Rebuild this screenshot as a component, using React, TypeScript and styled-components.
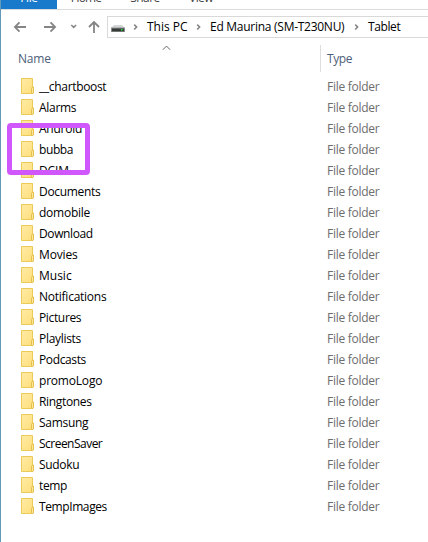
import React from "react";
import styled, { createGlobalStyle } from "styled-components";

const GlobalStyle = createGlobalStyle`
  * { box-sizing: border-box; }
  body { margin: 0; background: #fff; overflow: hidden; }
`;

const Window = styled.div`
  position: relative;
  display: flex;
  flex-direction: column;
  width: 428px;
  height: 542px;
  overflow: hidden;
  background: #fff;
  border-left: 1px solid #639ab8;
  font: 12px/21px "Open Sans", "Noto Sans", sans-serif;
  color: #000;
`;

const Text = styled.span<{ $track?: number }>`
  white-space: pre;
  letter-spacing: ${(p) => p.$track ?? 0}px;
`;

const TabBar = styled.div`
  display: flex;
  flex: none;
  height: 10px;
  overflow: hidden;
  border-bottom: 1px solid #dadbdc;
`;

const Tab = styled.div<{ $width: number; $active?: boolean }>`
  flex: none;
  width: ${(p) => p.$width}px;
  height: 9px;
  display: flex;
  align-items: flex-end;
  justify-content: center;
  line-height: 22px;
  color: ${(p) => (p.$active ? "#fff" : "#444")};
  background: ${(p) => (p.$active ? "#1979ca" : "transparent")};

  span { margin-bottom: 0; }
`;

const NavBar = styled.div`
  display: flex;
  flex: none;
  height: 28px;
  padding-top: 6px;
`;

const NavButtons = styled.div`
  flex: none;
  width: 106px;
  height: 22px;
  svg { display: block; }
`;

const AddressBar = styled.div`
  display: flex;
  align-items: center;
  flex: 1;
  height: 22px;
  border: 1px solid #d9d9d9;
  border-right: 0;
  padding-left: 3px;
  line-height: 20px;
`;

const Crumb = styled(Text)<{ $width: number }>`
  flex: none;
  width: ${(p) => p.$width}px;
`;

const Separator = styled.svg<{ $gap: number }>`
  flex: none;
  margin-right: ${(p) => p.$gap}px;
`;

const HeaderRow = styled.div`
  display: grid;
  grid-template-columns: 319px 1fr;
  flex: none;
  height: 38px;
  padding: 7px 0 6px;
  color: #4c607a;
`;

const HeaderCell = styled.div`
  position: relative;
  padding-left: 17px;
  line-height: 27px;
  & + & { padding-left: 6px; border-left: 1px solid #dedede; }
`;

const SortMark = styled.svg`
  position: absolute;
  left: 161px;
  top: 0;
`;

const FileList = styled.div`
  display: flex;
  flex-direction: column;
`;

const Row = styled.div`
  display: grid;
  grid-template-columns: 18px 288px 1fr;
  align-items: start;
  height: 21px;
  padding-left: 20px;
  line-height: 22px;
  svg { margin-top: 2px; }
`;

const Kind = styled(Text)`
  color: #6d6d6d;
`;

const Highlight = styled.div`
  position: absolute;
  left: 6px;
  top: 123px;
  width: 83px;
  height: 52px;
  border: 5px solid #d057fb;
  border-radius: 4px;
`;

const FolderIcon = () => (
  <svg width="13" height="16" viewBox="0 0 13 16">
    <defs>
      <linearGradient id="folder" x1="0" y1="0" x2="1" y2="1">
        <stop offset="0" stopColor="#ffeba6" />
        <stop offset="1" stopColor="#ffdf7c" />
      </linearGradient>
    </defs>
    <path d="M.5.5h11v15H.5z" fill="url(#folder)" stroke="#ecca58" />
    <path d="M10.5 15.5v-5l1-1.5h1v6l-.5.5z" fill="#ffe698" stroke="#e6c04c" />
  </svg>
);

const Chevron = ({ gap }: { gap: number }) => (
  <Separator $gap={gap} width="6" height="8" viewBox="0 0 6 8">
    <path d="M1.2 1.7L3.6 4 1.2 6.5" fill="none" stroke="#858585" strokeWidth="1.6" />
  </Separator>
);

const DriveIcon = () => (
  <Separator $gap={8} width="14" height="10" viewBox="0 0 14 10">
    <path d="M3 3h8l3 3H0z" fill="#d3d5d7" />
    <path d="M0 5.5h14V10H0z" fill="#8c8f90" />
    <path d="M1 6.5h12V9.3H1z" fill="#353b37" />
    <path d="M10 7h1.5v1.5H10z" fill="#25ea46" />
  </Separator>
);

const files: [string, number][] = [
  ["__chartboost", -0.33], ["Alarms", -0.3], ["Android", -0.25], ["bubba", -0.4], ["DCIM", -0.1],
  ["Documents", -0.33], ["domobile", -0.25], ["Download", -0.38], ["Movies", -0.15], ["Music", 0],
  ["Notifications", -0.25], ["Pictures", -0.35], ["Playlists", -0.3], ["Podcasts", -0.38],
  ["promoLogo", -0.2], ["Ringtones", -0.33], ["Samsung", -0.3], ["ScreenSaver", -0.52],
  ["Sudoku", -0.33], ["temp", -0.4], ["TempImages", -0.4],
];

export default function App() {
  return (
    <Window>
      <GlobalStyle />
      <TabBar>
        <Tab $width={56} $active><Text $track={-0.4}>File</Text></Tab>
        <Tab $width={58}><Text $track={-0.9}>Home</Text></Tab>
        <Tab $width={60}><Text $track={-0.6}>Share</Text></Tab>
        <Tab $width={52}><Text $track={-0.6}>View</Text></Tab>
      </TabBar>
      <NavBar>
        <NavButtons>
          <svg width="106" height="22" viewBox="1 16 106 22" fill="none" stroke="#858585" strokeWidth="1.8">
            <path d="M26 27H15.2M19.5 22.4L14.9 27l4.6 4.6" />
            <path d="M44 27h11M50.5 22.4l4.6 4.6-4.6 4.6" />
            <path d="M71.3 25l2.4 2.4 2.4-2.4" strokeWidth="1.5" />
            <path d="M94 33V22M89 27l5-5 5 5" />
          </svg>
        </NavButtons>
        <AddressBar>
          <DriveIcon />
          <Chevron gap={8} />
          <Crumb $width={49}>This PC</Crumb>
          <Chevron gap={8} />
          <Crumb $width={144} $track={-0.27}>Ed Maurina (SM-T230NU)</Crumb>
          <Chevron gap={8} />
          <Crumb $width={40} $track={-0.4}>Tablet</Crumb>
        </AddressBar>
      </NavBar>
      <HeaderRow>
        <HeaderCell>
          <Text $track={-0.2}>Name</Text>
          <SortMark width="9" height="6" viewBox="0 0 9 6">
            <path d="M.8 4.8L4.5 1.1l3.7 3.7" fill="none" stroke="#666" />
          </SortMark>
        </HeaderCell>
        <HeaderCell><Text $track={-0.4}>Type</Text></HeaderCell>
      </HeaderRow>
      <FileList>
        {files.map(([name, track]) => (
          <Row key={name}>
            <FolderIcon />
            <Text $track={track}>{name}</Text>
            <Kind $track={-0.27}>File folder</Kind>
          </Row>
        ))}
      </FileList>
      <Highlight />
    </Window>
  );
}
